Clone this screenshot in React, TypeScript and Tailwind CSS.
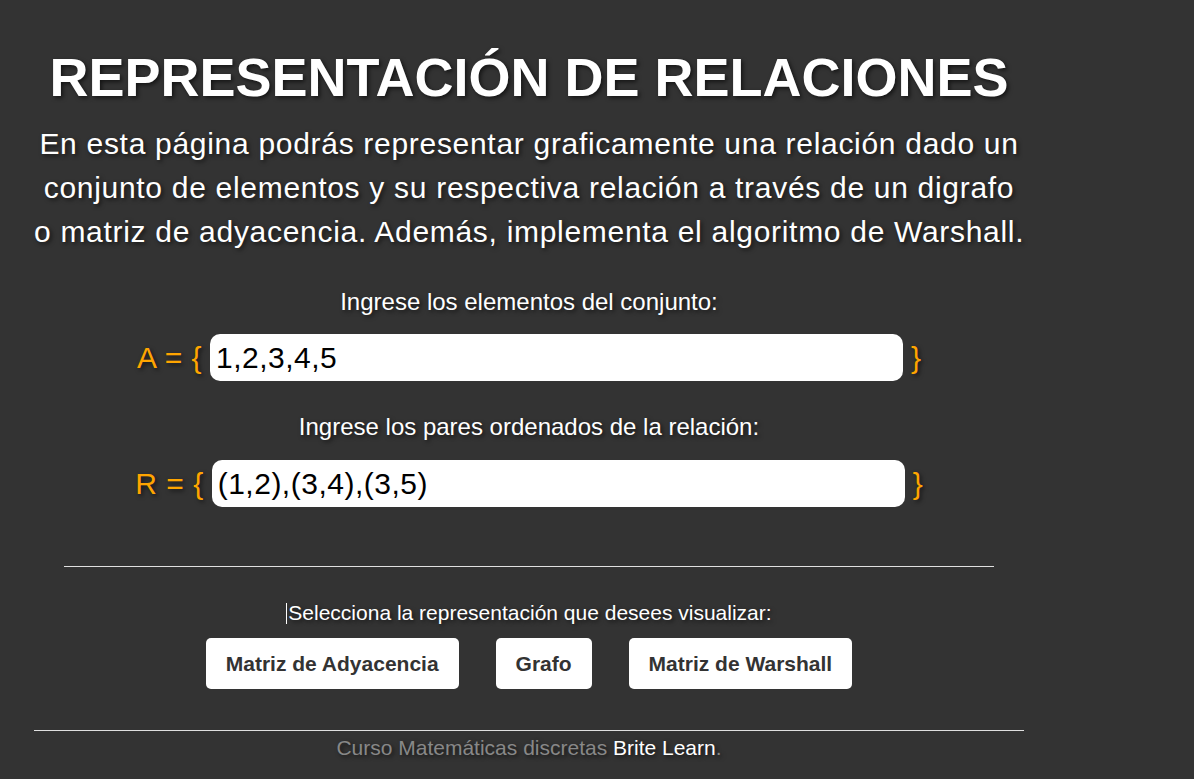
import React from "react";

const shadow = "[text-shadow:2px_2px_4px_rgba(0,0,0,0.6)]";

const SetRow = ({ name, value, className }: { name: string; value: string; className: string }) => (
  <div className={`flex items-center justify-center gap-2 ${className}`}>
    <span className={`text-[30px] tracking-[0.5px] text-[#ffa500] ${shadow}`}>{name} = {"{"}</span>
    <div className="flex h-[47px] w-[693px] items-center rounded-[10px] bg-white px-[6px] text-left text-[30px] tracking-[0.5px] text-black">
      {value}
    </div>
    <span className={`text-[30px] text-[#ffa500] ${shadow}`}>{"}"}</span>
  </div>
);

export default function App() {
  return (
    <div className="h-[779px] w-full overflow-hidden bg-[#333333] font-['Liberation_Sans',Arial,sans-serif] text-white">
      <div className="ml-[34px] w-[990px] pt-[46px] text-center">
        <h1 className={`whitespace-nowrap text-[54px] font-bold leading-[62px] ${shadow}`}>
          REPRESENTACIÓN DE RELACIONES
        </h1>
        <p className={`mt-[14px] whitespace-nowrap text-[30px] leading-[44px] tracking-[0.7px] ${shadow}`}>
          En esta página podrás representar graficamente una relación dado un
          <br />
          conjunto de elementos y su respectiva relación a través de un digrafo
          <br />
          o matriz de adyacencia. Además, implementa el algoritmo de Warshall.
        </p>

        <p className={`mt-[34px] text-[24px] leading-[28px] ${shadow}`}>
          Ingrese los elementos del conjunto:
        </p>
        <SetRow name="A" value="1,2,3,4,5" className="mt-[18px]" />

        <p className={`mt-[32px] text-[24px] leading-[28px] ${shadow}`}>
          Ingrese los pares ordenados de la relación:
        </p>
        <SetRow name="R" value="(1,2),(3,4),(3,5)" className="mt-[19px]" />

        <div className="mx-[30px] mt-[59px] h-px bg-[#e0e0e0]" />

        <p className={`mt-[32px] text-[21px] leading-[24px] ${shadow}`}>
          <span className="mr-px inline-block h-[21px] w-px translate-y-[4px] bg-white" />
          Selecciona la representación que desees visualizar:
        </p>
        <div className="mt-[13px] flex justify-center gap-[37px]">
          {["Matriz de Adyacencia", "Grafo", "Matriz de Warshall"].map((b) => (
            <button
              key={b}
              className="h-[51px] rounded-[5px] bg-white px-5 text-[21px] font-bold text-[#333333]"
            >
              {b}
            </button>
          ))}
        </div>

        <div className="mt-[41px] h-px bg-[#e0e0e0]" />
        <p className={`mt-[5px] text-[21px] leading-[24px] text-[#888888] ${shadow}`}>
          Curso Matemáticas discretas <span className="text-white">Brite Learn</span>.
        </p>
      </div>
    </div>
  );
}
